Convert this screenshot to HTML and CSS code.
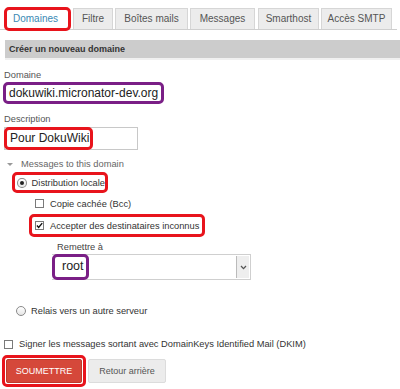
FILE: index.html
```html
<!DOCTYPE html>
<html lang="fr">
<head>
    <meta charset="UTF-8">
    <title>Domaines</title>
    <link rel="stylesheet" href="styles.css">
</head>
<body>
    <ul class="tabs">
        <li class="tab active">Domaines</li>
        <li class="tab tab-filter">Filtre</li>
        <li class="tab tab-boxes">Boîtes mails</li>
        <li class="tab tab-messages">Messages</li>
        <li class="tab tab-smarthost">Smarthost</li>
        <li class="tab tab-smtp">Accès SMTP</li>
    </ul>

    <div class="section-title">Créer un nouveau domaine</div>

    <form class="domain-form">
        <label class="field-label">Domaine</label>
        <div class="text-input mark-purple">dokuwiki.micronator-dev.org</div>

        <label class="field-label">Description</label>
        <div class="text-input desc-input">
            <span class="mark-red desc-value">Pour DokuWiki</span>
        </div>

        <div class="fieldset-title"><span class="arrow"></span>Messages to this domain</div>

        <div class="row radio-local mark-red">
            <span class="radio checked"></span>Distribution locale
        </div>

        <div class="row sub-row">
            <span class="checkbox"></span>Copie cachée (Bcc)
        </div>

        <div class="row accept-row mark-red">
            <span class="checkbox">
                <svg width="9" height="9" viewBox="0 0 9 9"><path d="M1.2 4.6 L3.4 7 L8 1.4" fill="none" stroke="#111" stroke-width="1.8"/></svg>
            </span>Accepter des destinataires inconnus
        </div>

        <label class="field-label sub-label">Remettre à</label>
        <div class="select">
            <span class="mark-purple select-value">root</span>
            <span class="select-arrow">
                <svg width="7" height="5" viewBox="0 0 7 5"><path d="M1 1 L3.5 3.6 L6 1" fill="none" stroke="#555" stroke-width="1.3"/></svg>
            </span>
        </div>

        <div class="row relay-row">
            <span class="radio"></span>Relais vers un autre serveur
        </div>

        <div class="row dkim-row">
            <span class="checkbox"></span>Signer les messages sortant avec DomainKeys Identified Mail (DKIM)
        </div>

        <div class="buttons">
            <span class="submit-wrap mark-red"><button type="button" class="btn btn-submit">SOUMETTRE</button></span>
            <button type="button" class="btn btn-back">Retour arrière</button>
        </div>
    </form>
</body>
</html>
```

FILE: styles.css
```css
body {
    font-family: "Liberation Sans", Arial, sans-serif;
    font-size: 9.3px;
    color: #555;
    margin: 0;
    padding: 0;
    background: #fff;
    white-space: nowrap;
}
.mark-red {
    border: 3px solid #e8141c;
    border-radius: 5px;
}
.mark-purple {
    border: 3px solid #7a1f86;
    border-radius: 5px;
}
.tabs {
    display: flex;
    align-items: flex-start;
    list-style: none;
    margin: 0 3px 0 0;
    padding: 8px 0 0 5px;
    height: 21px;
    border-bottom: 1px solid #cfcfcf;
}
.tab {
    box-sizing: border-box;
    height: 21px;
    line-height: 20px;
    margin-right: 2px;
    font-size: 10px;
    text-align: center;
    color: #555;
    background: #ececec;
    border: 1px solid #d6d6d6;
    border-bottom: none;
}
.tab-filter { width: 40px; }
.tab-boxes { width: 73px; }
.tab-messages { width: 65px; margin-right: 3px; }
.tab-smarthost { width: 61px; }
.tab-smtp { width: 71px; }
.tab.active {
    box-sizing: border-box;
    width: 67px;
    height: 24px;
    line-height: 18px;
    margin: -1px 2px 0 -1px;
    padding-right: 4px;
    color: #3a89b4;
    background: #fff;
    border: 3px solid #e8141c;
    border-radius: 5px;
    position: relative;
}
.section-title {
    margin: 10px 0 0 5px;
    height: 18px;
    line-height: 18px;
    padding-left: 4px;
    background: #cccccc;
    font-size: 9px;
    font-weight: bold;
    color: #333;
    border-bottom: 2px solid #f0f0f0;
}
.domain-form {
    padding-left: 4px;
}
.field-label {
    display: block;
    margin-top: 9px;
    line-height: 13px;
}
.text-input {
    box-sizing: border-box;
    font-size: 12px;
    color: #222;
    background: #fff;
}
.text-input.mark-purple {
    width: 161px;
    height: 22px;
    line-height: 16px;
    margin-left: -1px;
    padding-left: 3px;
}
.desc-input {
    width: 134px;
    height: 23px;
    margin-top: 1px;
    border: 1px solid #c8c8c8;
}
.desc-value {
    display: block;
    box-sizing: border-box;
    width: 89px;
    height: 23px;
    margin: -1px 0 0 -1px;
    padding-left: 3px;
    line-height: 17px;
}
.fieldset-title {
    margin-top: 8px;
    line-height: 13px;
    color: #666;
    display: flex;
    align-items: center;
}
.arrow {
    width: 0;
    height: 0;
    margin: 0 8px 0 3px;
    border-left: 3px solid transparent;
    border-right: 3px solid transparent;
    border-top: 3px solid #999;
}
.row {
    display: flex;
    align-items: center;
    color: #333;
}
.radio-local {
    box-sizing: border-box;
    width: 96px;
    height: 21px;
    margin: 1px 0 0 8px;
    padding-left: 2px;
}
.radio {
    box-sizing: border-box;
    width: 10px;
    height: 10px;
    margin-right: 5px;
    border: 1px solid #8a8a8a;
    border-radius: 50%;
    background: linear-gradient(#fff, #e6e6e6);
    display: flex;
    align-items: center;
    justify-content: center;
}
.radio.checked::after {
    content: "";
    width: 4px;
    height: 4px;
    border-radius: 50%;
    background: #222;
}
.checkbox {
    box-sizing: border-box;
    width: 9px;
    height: 9px;
    margin-right: 6px;
    border: 1px solid #7a7a7a;
    background: #fff;
    display: flex;
    align-items: center;
    justify-content: center;
}
.checkbox svg {
    display: block;
    margin-top: -1px;
}
.sub-row {
    margin: 4px 0 0 31px;
    height: 13px;
}
.accept-row {
    box-sizing: border-box;
    width: 176px;
    height: 23px;
    margin: 4px 0 0 25px;
    padding-left: 3px;
}
.sub-label {
    margin: 4px 0 0 53px;
    color: #444;
}
.select {
    box-sizing: border-box;
    display: flex;
    justify-content: space-between;
    width: 199px;
    height: 26px;
    margin-left: 48px;
    border: 1px solid #cfcfcf;
    border-left: none;
}
.select-value {
    box-sizing: border-box;
    width: 37px;
    height: 26px;
    margin-top: -1px;
    padding-left: 7px;
    line-height: 19px;
    font-size: 12.5px;
    color: #222;
}
.select-arrow {
    width: 12px;
    margin: 1px 1px 1px 0;
    background: #eee;
    border-left: 1px solid #bbb;
    display: flex;
    align-items: center;
    justify-content: center;
}
.relay-row {
    margin: 25px 0 0 12px;
    height: 12px;
}
.dkim-row {
    margin-top: 21px;
    height: 12px;
}
.buttons {
    display: flex;
    align-items: center;
    margin: 5px 0 0 -2px;
}
.submit-wrap {
    display: block;
    padding: 1px;
    margin-right: 2px;
}
.btn {
    font-family: inherit;
    font-size: 9px;
    height: 24px;
    cursor: pointer;
}
.btn-submit {
    display: block;
    width: 76px;
    color: #fff;
    background: #d5483a;
    border: 1px solid #c0392b;
    border-radius: 2px;
}
.btn-back {
    width: 78px;
    color: #555;
    background: #ececec;
    border: 1px solid #dcdcdc;
    border-radius: 2px;
}
```
